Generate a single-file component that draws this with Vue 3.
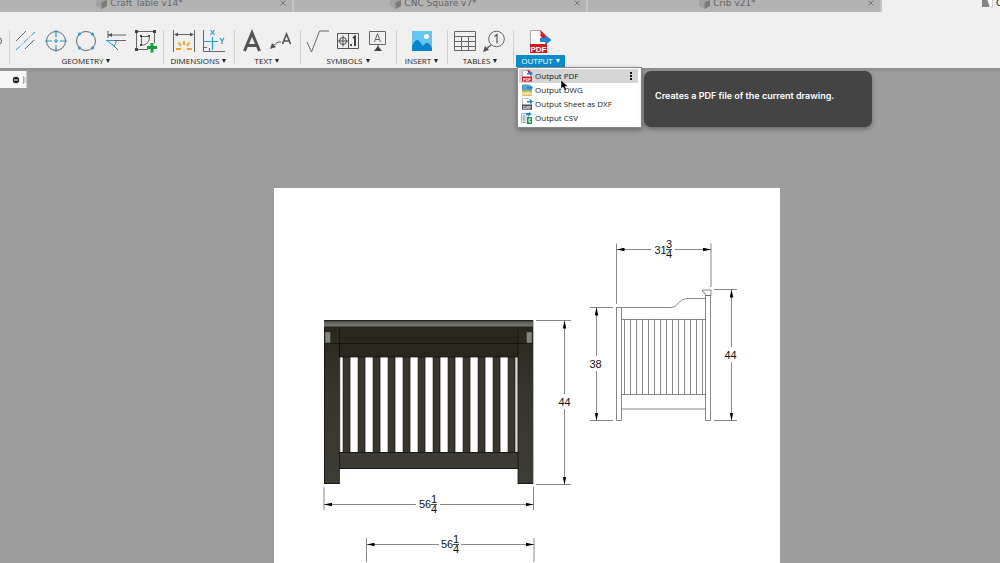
<script setup>
const tabs = ['Craft Table v14*', 'CNC Square v7*', 'Crib v21*']
const items = [
  { label: 'Output PDF', kind: 'pdf' },
  { label: 'Output DWG', kind: 'dwg' },
  { label: 'Output Sheet as DXF', kind: 'dxf' },
  { label: 'Output CSV', kind: 'csv' },
]
const slats = Array.from({ length: 12 }, (_, i) => 343 + i * 15)
const sideSlats = Array.from({ length: 14 }, (_, i) => 624.5 + i * 6)
const dims = [
  'M416 504.500H324', 'M440 504.500h93.500',
  'M439 544.500h-72.500', 'M461 544.500h73',
  'M651 249.500h-34.500', 'M675 249.500h36',
  'M564.500 394v-73.500', 'M564.500 409v75.500',
  'M596.500 356v-48.500', 'M596.500 371v49.500',
  'M731.500 347v-57.500', 'M731.500 362v58.500',
]
</script>

<template>
  <div class="app">
    <nav class="tabs" aria-label="Documents">
      <div v-for="t in tabs" :key="t" class="tab">
        <button class="tab-name">
          <svg width="11" height="12" viewBox="0 0 11 12"><path d="M5.500 0 11 3v6l-5.500 3L0 9V3z" fill="#a2a2a2" /><path d="M5.500 5.500 11 3v6l-5.500 3z" fill="#7b7b7b" /></svg>
          <span>{{ t }}</span>
        </button>
        <button class="close" aria-label="Close">
          <svg width="8" height="8" viewBox="0 0 8 8"><path d="M1.500 1.500l5 5M6.500 1.500l-5 5" stroke="#777" /></svg>
        </button>
      </div>
      <div class="tab current">
        <svg width="11" height="12" viewBox="0 0 11 12"><path d="M0 0h4l4 10H0z" fill="#858585" /><path d="M5 0h5.500v10.500H8" fill="#fff" stroke="#aaa" stroke-dasharray="1 1" /></svg>
        <span>Crib</span>
      </div>
    </nav>

    <div class="toolbar" role="toolbar">
      <div class="edge"><svg width="3" height="10" viewBox="0 0 3 10"><path d="M-3 .5a4.500 4.500 0 0 1 0 9" fill="#dceaf2" stroke="#666" /></svg></div>

      <section class="group geometry">
        <div class="icons">
          <button aria-label="Centerline"><svg viewBox="0 0 24 24"><path d="M2 12 12 2M11 20 20 11" stroke="#666" /><path d="M2 21 21 3" stroke="#1e9be0" stroke-dasharray="6 1.500 1.500 1.500" /></svg></button>
          <button aria-label="Center mark"><svg viewBox="0 0 24 24"><circle cx="12" cy="12" r="9.500" stroke="#666" /><path d="M12 1v7m0 2v4m0 2v7M1 12h7m2 0h4m2 0h7" stroke="#1e9be0" stroke-width="1.200" /></svg></button>
          <button aria-label="Center mark pattern"><svg viewBox="0 0 24 24"><circle cx="12" cy="12" r="9.500" stroke="#666" /><path d="M4 5h3M5.500 3.500v3M17 5h3M18.500 3.500v3M4 19h3M5.500 17.500v3M17 19h3M18.500 17.500v3" stroke="#1e9be0" stroke-width="1.500" /></svg></button>
          <button aria-label="Edge extension"><svg viewBox="0 0 24 24"><path d="M4 6h18M9 11.500h13M8 15l6 6" stroke="#666" /><path d="M4 2v7" stroke="#555" /><path d="m4 6 4-2v4z" fill="#555" /><path d="M2 11.500h8M2 11l8 6q2-2 2-5" stroke="#1e9be0" /></svg></button>
          <button aria-label="Create sketch"><svg viewBox="0 0 24 24"><path d="M2 2.500h18M2.500 21V3m18 0v11M3 20.500h11M7.500 7.500h8M7.500 7.500v9M15.500 7.500q0 8-8 9" stroke="#666" /><path d="M1 1h3v3H1zM19 1h3v3h-3zM1 19h3v3H1zM6 6h2v2H6zM14 6h2v2h-2zM6 15h2v2H6z" fill="#444" /><path d="M16.500 14h3v3h3.500v3h-3.500v3.500h-3V20H13v-3h3.500z" fill="#11a33b" /></svg></button>
        </div>
        <button class="label">GEOMETRY<i></i></button>
      </section>

      <section class="group dimensions">
        <div class="icons">
          <button aria-label="Dimension"><svg viewBox="0 0 24 24"><path d="M1.500 1v22M22.500 1v22M4 5.500h16" stroke="#666" /><path d="m2 5.500 4-2v4zM22 5.500l-4-2v4z" fill="#555" /><path d="M12 12v4M6.500 13.500 9 17M17.500 13.500 15 17M4 20h5M15 20h5" stroke="#f5a31a" stroke-width="2" /></svg></button>
          <button aria-label="Ordinate dimension"><svg viewBox="0 0 24 24"><path d="M1.500 1v21.500H23M2 18.500h3M7.500 19v3" stroke="#666" /><path d="M1 12.500h15M10.500 8v13M8.500 1l4 5m0-5-4 5M18 9l2 3 2-3m-2 3v3" stroke="#1e9be0" stroke-width="1.200" /></svg></button>
        </div>
        <button class="label">DIMENSIONS<i></i></button>
      </section>

      <section class="group text">
        <div class="icons">
          <button aria-label="Text"><svg viewBox="0 0 24 24"><path d="M4.500 22 12 4l7.500 18M7.500 16.500h9" stroke="#555" stroke-width="3" /></svg></button>
          <button aria-label="Leader text"><svg viewBox="0 0 24 24"><path d="M12.500 15 16.500 5l4 10M14 12h5" stroke="#555" stroke-width="1.600" /><path d="M11 13H8l-5 4" stroke="#555" /><path d="m0 20 2-6 4 4z" fill="#555" /></svg></button>
        </div>
        <button class="label">TEXT<i></i></button>
      </section>

      <section class="group symbols">
        <div class="icons">
          <button aria-label="Surface texture"><svg viewBox="0 0 24 24"><path d="M1 13l4.500 10 8-21H23" stroke="#666" /></svg></button>
          <button aria-label="Feature control frame"><svg viewBox="0 0 24 24"><path d="M1.500 4.500h21v15h-21zM12.500 4.500v15M2 12h10M7 6.500v11" stroke="#555" /><circle cx="7" cy="12" r="3.500" stroke="#444" /><path d="M15 15v2M17 9l2-1.500V17" stroke="#333" stroke-width="1.800" /></svg></button>
          <button aria-label="Datum identifier"><svg viewBox="0 0 24 24"><path d="M3.500 2.500h16v13h-16zM12 15v4M8.500 13 11.500 4.500l3 8.500M9.500 10.500h4" stroke="#666" /><path d="m12 17 4 5H8z" fill="#444" /></svg></button>
        </div>
        <button class="label">SYMBOLS<i></i></button>
      </section>

      <section class="group insert">
        <div class="icons">
          <button aria-label="Insert image"><svg viewBox="0 0 24 24"><path d="M2 2h20v20H2z" fill="#65c5f1" /><circle cx="16.500" cy="7.500" r="2.500" fill="#fff" /><path d="M2 17q3-7 6-6 3 3 5 6 3-4 5-3 3 2 4 5v3H2z" fill="#0784cc" /></svg></button>
        </div>
        <button class="label">INSERT<i></i></button>
      </section>

      <section class="group tables">
        <div class="icons">
          <button aria-label="Table"><svg viewBox="0 0 24 24"><path d="M1.500 2.500h21v19h-21zM1.500 7.500h21M1.500 12.500h21M1.500 17.500h21M8.500 7.500v14M15.500 7.500v14" stroke="#666" /></svg></button>
          <button aria-label="Balloon"><svg viewBox="0 0 24 24"><circle cx="13.500" cy="10" r="7.800" stroke="#666" /><path d="M8 16l-6 5M11.500 7.500l2.500-2v9" stroke="#555" stroke-width="1.200" /><path d="m0 23 2-6 4 4z" fill="#555" /></svg></button>
        </div>
        <button class="label">TABLES<i></i></button>
      </section>

      <section class="group output">
        <div class="icons">
          <button aria-label="Output PDF"><svg viewBox="0 0 24 24"><path d="M1.500 1.500h10l5 6v9h-15z" fill="#fff" stroke="#777" stroke-width=".6" /><path d="M11.500 1 17 7v2h-4l-1.500-2z" fill="#d71920" /><path d="M1 15h17v9H1z" fill="#d71920" /><text x="9.500" y="22.500" text-anchor="middle" class="pdf-mark">PDF</text><path d="M11 9h5.500V6l6 5-6 5v-3H11z" fill="#1687d9" /></svg></button>
        </div>
        <button class="label" aria-expanded="true">OUTPUT<i></i></button>
        <div class="menu" role="menu">
          <button v-for="(it, n) in items" :key="it.kind" role="menuitem" class="item" :class="{ active: n === 0 }">
            <svg v-if="it.kind === 'csv'" width="12" height="12" viewBox="0 0 12 12"><path d="M.5 1.500h7v9h-7zM.5 4h7M.5 6h7M.5 8h7M3 1v10" fill="#fff" stroke="#7b9aa0" stroke-width=".7" /><path d="M5 1h3V0l3 2-3 2V3H5z" fill="#1687d9" /><path d="M6 5h5v7H6z" fill="#169b55" /><path d="M10 7H8v3h2" stroke="#fff" fill="none" /></svg>
            <svg v-else width="12" height="12" viewBox="0 0 12 12">
              <path d="M1.500.5h6l3 3v8h-9z" fill="#fff" stroke="#888" stroke-width=".5" />
              <path v-if="it.kind === 'dwg'" d="M1 1h7l3 3v4H1z" fill="#4aa6cf" />
              <path v-if="it.kind === 'pdf'" d="M6 0h2l3 4H8z" fill="#d71920" />
              <path d="M1 6.500h10v5H1z" :class="it.kind" />
              <text x="6" y="10.500" text-anchor="middle" class="tiny-mark">{{ it.kind.toUpperCase() }}</text>
              <path d="M6 3h3V1l3 2.500L9 6V4.500H6z" fill="#1687d9" />
            </svg>
            <span>{{ it.label }}</span>
            <b v-if="n === 0" class="dots"><u></u><u></u><u></u></b>
          </button>
          <svg class="cursor" width="9" height="13" viewBox="0 0 9 13"><path d="M1 1v9l2-2 2 4 1.500-1L5 7.500h3z" fill="#000" stroke="#fff" stroke-width=".5" /></svg>
        </div>
        <div class="tip" role="tooltip">Creates a PDF file of the current drawing.</div>
      </section>
    </div>

    <main class="canvas">
      <button class="browser" aria-label="Expand browser">
        <svg width="14" height="10" viewBox="0 0 14 10"><circle cx="4" cy="5" r="3.200" fill="#222" /><path d="M2 5h4" stroke="#fff" /><path d="M11.500 1v8M13 2v6" stroke="#aaa" /></svg>
      </button>
      <div class="sheet">
        <svg class="drawing" viewBox="274 188 506 375" role="img" aria-label="Crib drawing">
          <defs>
            <linearGradient id="wood" x1="0" y1="0" x2="0" y2="1"><stop offset="0" stop-color="#2a271f" /><stop offset=".4" stop-color="#37342c" /><stop offset="1" stop-color="#3d3c36" /></linearGradient>
            <linearGradient id="rail" x1="0" y1="0" x2="0" y2="1"><stop offset="0" stop-color="#3a3a35" /><stop offset=".3" stop-color="#595a54" /><stop offset=".65" stop-color="#7a7c74" /><stop offset="1" stop-color="#22211c" /></linearGradient>
            <marker id="arrow" viewBox="0 0 8 4" refX="8" refY="2" markerWidth="8" markerHeight="4" markerUnits="userSpaceOnUse" orient="auto"><path d="M0 .2 8 2 0 3.800z" fill="#000" stroke="none" /></marker>
          </defs>

          <g>
            <g v-for="x in slats" :key="x">
              <path :d="`M${x} 357h7v95h-7z`" fill="#38362e" />
              <path :d="`M${x} 357v95M${x + 6.5} 357v95`" stroke="#1f1e19" stroke-width=".6" />
              <path :d="`M${x + 7.5} 357v95`" stroke="#aaa8a5" />
            </g>
            <path d="M340 357v95M517 357v95" stroke="#b5b2b0" />
            <path d="M339 328h179v29H339z" fill="#29261d" />
            <path d="M339 452h179v17H339z" fill="#3b3a34" />
            <path d="M324 328h15v156h-15zM518 328h15v156h-15z" fill="url(#wood)" />
            <path d="M324 343.500h209M339.500 328v156M518 328v156M339 357h179M339 452.500h179M339 468.500h179M324.500 328v156M324 483.500h15M518 483.500h15" stroke="#12110d" stroke-width=".8" />
            <path d="M324 320h209v8H324z" fill="url(#rail)" />
            <path d="M324 320.500h209M324 327.500h209" stroke="#25241f" />
            <path d="M533.500 320v164" stroke="#aaa" stroke-width=".8" />
            <path d="M325 332h5.500v11H325zM526.500 332h5.500v11h-5.500z" fill="#85857f" stroke="#383832" stroke-width=".6" />
          </g>

          <g class="thin">
            <path d="M616.500 307.500h5v113h-5zM621.500 307.500H671q4 0 7-4 4-5 9-5h18M705.500 295.500h5v125h-5zM702.500 290h8.500v5.500h-5.500q0-3-3-4zM621.500 319.500h84M621.500 394.500h84M621.500 409h84" />
            <path v-for="x in sideSlats" :key="x" :d="`M${x} 319.500v75`" />
          </g>

          <g class="thin">
            <path d="M324 487v23M533.500 487v23M536 320.500h35M536 484.500h35M366.500 538v24M534 538v24M616.500 243.500V304M711 243.500V287M589.500 307.500H613M589.500 420.500H613M714 289.500h23M714 420.500h23" />
          </g>
          <g class="dim">
            <path v-for="d in dims" :key="d" :d="d" />
          </g>
          <g class="num">
            <text x="564.500" y="406">44</text>
            <text x="595.500" y="368">38</text>
            <text x="730.500" y="359">44</text>
            <text x="425" y="508">56</text>
            <text x="447" y="548">56</text>
            <text x="660.500" y="254">31</text>
            <text x="434" y="503">1</text><text x="434" y="513">4</text>
            <text x="456" y="543">1</text><text x="456" y="553">4</text>
            <text x="669" y="248">3</text><text x="669" y="258">4</text>
          </g>
          <path d="M431 504.500h6M453 544.500h6M666 249.500h6" stroke="#222" stroke-width=".8" />
        </svg>
      </div>
    </main>
  </div>
</template>

<style>
body { margin: 0; overflow: hidden; }
</style>

<style scoped>
.app { display: flex; flex-direction: column; height: 100vh; background: #9d9d9d; font-family: "Open Sans", "Noto Sans", sans-serif; color: #222; overflow: hidden; }
button { border: 0; padding: 0; margin: 0; background: none; font: inherit; color: inherit; }
svg { display: block; fill: none; overflow: visible; flex: none; }
.tabs { display: flex; align-items: flex-end; height: 12px; flex: none; background: #f0f0f0; overflow: hidden; }
.tab { box-sizing: border-box; display: flex; align-items: center; flex: 0 0 29.4%; height: 18px; padding-right: 5px; background: #b3b3b3; border-right: 2px solid #c6c6c6; font: 9px "DejaVu Sans", sans-serif; color: #666; }
.tab-name { flex: 1; display: flex; align-items: center; justify-content: center; gap: 3px; }
.current { flex: 1; background: none; border: 0; padding: 0 0 0 100px; gap: 3px; color: #222; white-space: nowrap; }
.toolbar { position: relative; z-index: 2; display: flex; flex: none; height: 56px; background: #f0f0f0; }
.edge { width: 9px; padding-top: 24px; }
.group { position: relative; box-sizing: border-box; display: flex; flex-direction: column; align-items: center; padding: 17px 6px 0; }
.group::before { content: ""; position: absolute; left: 0; top: 18px; bottom: 4px; width: 1px; background: #d0d0d0; }
.icons { display: flex; gap: 6px; }
.icons svg { width: 24px; height: 24px; }
.label { box-sizing: border-box; display: flex; align-items: center; justify-content: center; gap: 3px; height: 12px; margin-top: 2px; padding-bottom: 1px; font-size: 8px; font-weight: 500; line-height: 10px; white-space: nowrap; }
.label i { border: 2px solid transparent; border-top: 4px solid currentColor; border-bottom: 0; }
.geometry { width: 154px; }
.dimensions { width: 71px; }
.symbols { width: 96px; }
.text { width: 66px; }
.tables { width: 66px; }
.insert { width: 51px; }
.output { padding: 17px 3px 0; }
.output .label { width: 49px; background: #0a8ccf; color: #fff; }
.pdf-mark { font: bold 8px "Liberation Sans", sans-serif; fill: #fff; }
.tiny-mark { font: bold 4px "Liberation Sans", sans-serif; fill: #fff; }
.pdf { fill: #d71920; }
.dwg { fill: #e0b52e; }
.dxf { fill: #4a4a4a; }
.menu { position: absolute; left: 4px; top: 55px; box-sizing: border-box; display: flex; flex-direction: column; width: 125px; height: 61px; padding: 1px 3px 1px 1px; background: #fff; border: 1px solid #888; box-shadow: 0 2px 5px rgba(0, 0, 0, .35); }
.item { display: flex; flex: 1; align-items: center; gap: 2px; padding: 0 0 1px 2px; font-size: 8px; line-height: 10px; text-align: left; white-space: nowrap; }
.active { background: #d5d5d5; }
.dots { display: grid; gap: 1px; margin-left: auto; padding-right: 6px; }
.dots u { width: 2px; height: 2px; background: #111; }
.cursor { position: absolute; left: 42px; top: 11px; }
.tip { position: absolute; left: 131px; top: 59px; box-sizing: border-box; width: 228px; height: 56px; padding: 18px 11px; border-radius: 7px; background: #444; box-shadow: 0 2px 5px rgba(0, 0, 0, .35); color: #fff; font: 600 9px/14px Inter, sans-serif; white-space: nowrap; }
.canvas { position: relative; flex: 1; min-height: 0; display: flex; padding-top: 120px; box-shadow: inset 0 5px 5px -4px #888; }
.browser { position: absolute; left: 0; top: 3px; display: flex; justify-content: flex-end; align-items: center; width: 27px; height: 17px; background: #f7f7f7; border-right: 1px solid #ccc; }
.sheet { width: 50.6%; margin-left: 27.4%; background: #fff; overflow: hidden; }
.drawing { width: 100%; }
.thin { stroke: #555; stroke-width: .7; }
.dim { stroke: #555; stroke-width: .7; }
.dim path { marker-end: url(#arrow); }
.num { font: 11px "Liberation Sans", sans-serif; fill: #111; text-anchor: middle; }
</style>
